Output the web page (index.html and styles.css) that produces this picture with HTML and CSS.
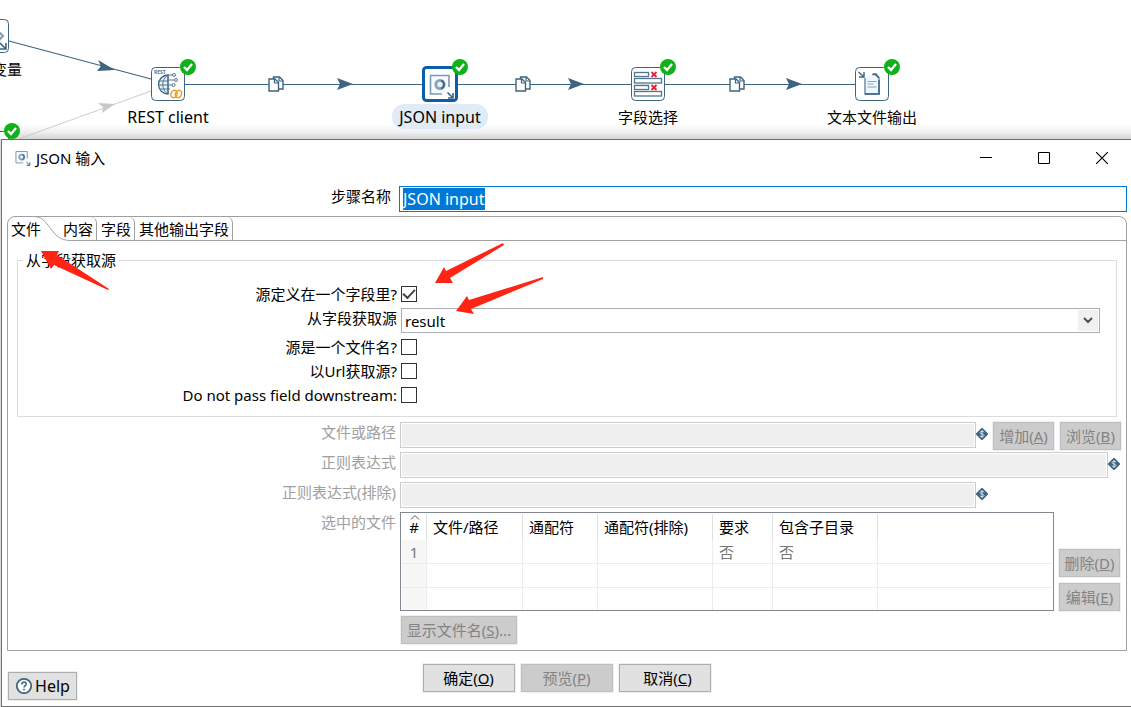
FILE: index.html
```html
<!DOCTYPE html>
<html lang="zh-CN">
<head>
<meta charset="utf-8">
<title>JSON 输入</title>
<link rel="stylesheet" href="styles.css">
</head>
<body>
<svg class="defs" aria-hidden="true">
  <defs>
    <symbol id="ok" viewBox="0 0 16 16"><circle cx="8" cy="8" r="8" fill="#0db315"/><path d="M4 8l3 3 5-6" fill="none" stroke="#fff" stroke-width="2.4"/></symbol>
    <symbol id="var" viewBox="0 0 12 12"><path d="M6 .5L11.500 6 6 11.500.5 6z" fill="#3d6480" stroke="#3d6480" stroke-width="1.400" stroke-linejoin="round"/><path d="M8.200 4.300C7.500 2.900 4 3 4 4.600S8 5.800 8 7.400 4.600 9 3.800 7.700M6 2v8" fill="none" stroke="#e4ebf0" stroke-width=".9"/></symbol>
    <symbol id="json" viewBox="0 0 26 26"><path d="M20 14V2.500H1.500V21H13" fill="#f4faff" stroke="#7f9aae" stroke-width="1.600"/><circle cx="11" cy="11.500" r="4.200" fill="#e3f3ff" stroke="#8ba3b5" stroke-width="2.800"/><path d="M12 7.500a4.200 4.200 0 0 1 0 8" fill="none" stroke="#3d6480" stroke-width="1.800"/><path d="M18.500 19.500l5 5M24 20v5h-5" fill="none" stroke="#3d6480" stroke-width="1.600"/></symbol>
    <symbol id="pages" viewBox="0 0 16 16"><path d="M5.500 3V1h6l3.500 3.500V13H6z" fill="#fff" stroke="#3d6480" stroke-width="1.400"/><path d="M11 1v4h4" fill="none" stroke="#3d6480" stroke-width="1.200"/><path d="M1 3h6l3.500 3.500V15H1z" fill="#fff" stroke="#3d6480" stroke-width="1.400"/><path d="M6.500 3v4h4" fill="none" stroke="#3d6480" stroke-width="1.200"/></symbol>
    <symbol id="head" viewBox="0 0 16 12"><path d="M0 0l16 6-16 6 3-6z" fill="#3d6480"/></symbol>
  </defs>
</svg>

<section class="canvas">
  <svg class="hops" width="1131" height="139" aria-hidden="true">
    <g fill="none" stroke="#3d6480" stroke-width="1.200">
      <path d="M9 41L151 79"/><path d="M185 84.500H422M458 84.500H631M665 84.500H855"/>
    </g>
    <path d="M20 138.500L151 91" stroke="#ccc" fill="none"/>
    <path d="M98 60l17 10-18 1 4-5z" fill="#3d6480"/>
    <path d="M98 103l17 1-13 9 1-6z" fill="#c8c8c8"/>
    <use href="#pages" x="268" y="76" width="16" height="16"/>
    <use href="#pages" x="515" y="76" width="16" height="16"/>
    <use href="#pages" x="729" y="76" width="16" height="16"/>
    <use href="#head" x="337" y="78" width="16" height="12"/>
    <use href="#head" x="568" y="78" width="16" height="12"/>
    <use href="#head" x="786" y="78" width="16" height="12"/>
  </svg>

  <div class="node node-vars">
    <svg class="icon" viewBox="0 0 34 34"><rect x=".5" y=".5" width="33" height="33" rx="4" fill="#fff" stroke="#3d6480"/><path d="M23 12l5 5-5 5" fill="none" stroke="#7f9aae" stroke-width="2"/><path d="M25 24l5 5M31 24v6h-6" fill="none" stroke="#3d6480" stroke-width="1.600"/></svg>
    <span class="caption">获取变量</span>
  </div>
  <div class="node node-below">
    <svg class="icon" viewBox="0 0 34 34"><rect x=".5" y=".5" width="33" height="33" rx="4" fill="#fff" stroke="#3d6480"/></svg>
    <svg class="badge"><use href="#ok"/></svg>
  </div>
  <div class="node node-rest">
    <svg class="icon" viewBox="0 0 34 34"><rect x=".5" y=".5" width="33" height="33" rx="4" fill="#fff" stroke="#3d6480"/>
      <text class="tiny" x="3" y="7">REST</text>
      <path d="M17 8a9.500 9.500 0 0 0 0 19z" fill="#e6f3fc" stroke="#3d6480" stroke-width="1.300"/><path d="M17 8c-7 4-7 15 0 19M17 8v19M8 14h9M7.500 18h9M9 22h8" fill="none" stroke="#53758d"/><path d="M17 8h5M17 13h6M17 18h4M17 22h2" stroke="#53758d"/><g fill="#fff" stroke="#53758d"><circle cx="23" cy="8" r="1.500"/><circle cx="25" cy="13" r="1.500"/><circle cx="22.500" cy="18" r="1.500"/></g>
      <g fill="none" stroke="#f39a1e" stroke-width="1.500"><ellipse cx="23" cy="27" rx="3" ry="3.800" transform="rotate(25 23 27)"/><ellipse cx="27.500" cy="27" rx="3" ry="3.800" transform="rotate(25 27.500 27)"/></g></svg>
    <svg class="badge"><use href="#ok"/></svg>
    <span class="caption latin">REST client</span>
  </div>
  <div class="node node-json">
    <svg class="icon" viewBox="0 0 34 34"><rect x="0.500" y="0.500" width="33" height="33" rx="3" fill="#fff" stroke="#0d5ea8" stroke-width="3"/><use href="#json" x="6" y="6" width="26" height="26"/></svg>
    <svg class="badge"><use href="#ok"/></svg>
    <span class="caption latin picked">JSON input</span>
  </div>
  <div class="node node-select">
    <svg class="icon" viewBox="0 0 34 34"><rect x=".5" y=".5" width="33" height="33" rx="4" fill="#fff" stroke="#3d6480"/><g fill="#fff" stroke="#53758d" stroke-width="1.300"><rect x="3.500" y="5.500" width="14" height="4"/><rect x="3.500" y="11.500" width="27" height="4.500"/><rect x="3.500" y="18.500" width="14" height="4"/><rect x="3.500" y="24.500" width="27" height="4.500"/></g><path d="M4 16.500h15" stroke="#8ba3b5" stroke-width="1.500"/><path d="M20.500 5l5 5m0-5l-5 5M20.500 18l5 5m0-5l-5 5" stroke="#ed1c35" stroke-width="1.800"/></svg>
    <svg class="badge"><use href="#ok"/></svg>
    <span class="caption">字段选择</span>
  </div>
  <div class="node node-text">
    <svg class="icon" viewBox="0 0 34 34"><rect x=".5" y=".5" width="33" height="33" rx="4" fill="#fff" stroke="#3d6480"/><path d="M10 11v16h14V11l-4-3.500h-3" fill="#edf7ff" stroke="#6f8da3" stroke-width="1.500"/><path d="M10 27h14V13" fill="none" stroke="#3d6480" stroke-width="1.500"/><path d="M18 7h3l3 4" fill="none" stroke="#3d6480" stroke-width="1.500"/><path d="M12.500 14.500h9M12.500 17h6M12.500 20h9" stroke="#8ba3b5"/><path d="M3.500 5l5 4.500M9 5v5H4" fill="none" stroke="#3d6480" stroke-width="1.400"/></svg>
    <svg class="badge"><use href="#ok"/></svg>
    <span class="caption">文本文件输出</span>
  </div>
</section>

<main class="dialog">
  <header class="titlebar">
    <svg width="16" height="16"><use href="#json"/></svg>
    <h1>JSON 输入</h1>
    <div class="winbtns">
      <button aria-label="最小化"><svg width="12" height="12"><path d="M0 5.500h12" stroke="#000"/></svg></button>
      <button aria-label="最大化"><svg width="12" height="12"><path d="M.5.5h11v11H.5z" fill="none" stroke="#000"/></svg></button>
      <button aria-label="关闭"><svg width="12" height="12"><path d="M0 0l12 12M12 0L0 12" stroke="#000" stroke-width="1.200"/></svg></button>
    </div>
  </header>

  <div class="namerow">
    <label for="step">步骤名称</label>
    <input id="step" class="stepname latin" value="JSON input">
  </div>

  <div class="folder">
    <div class="tabs" role="tablist">
      <button class="tab current" role="tab" aria-selected="true">文件<svg class="curve" width="62" height="25" aria-hidden="true"><path d="M0 25V8L8 1H26C42 0 42 24 62 24V25z" fill="#fff"/><path d="M7 .5H26C42 .5 42 24.500 62 24.500" fill="none" stroke="#a0a0a0"/></svg></button>
      <button class="tab" role="tab">内容</button>
      <button class="tab" role="tab">字段</button>
      <button class="tab" role="tab">其他输出字段</button>
    </div>
    <div class="panel">
      <fieldset>
        <legend>从字段获取源</legend>
        <div class="opt"><label for="c1">源定义在一个字段里?</label><input id="c1" type="checkbox" checked></div>
        <div class="opt combo"><label for="src">从字段获取源</label>
          <div class="selectbox"><select id="src"><option>result</option></select><span class="drop"><svg width="10" height="7"><path d="M1 1l4 4 4-4" fill="none" stroke="#505050" stroke-width="2"/></svg></span></div></div>
        <div class="opt"><label for="c2">源是一个文件名?</label><input id="c2" type="checkbox"></div>
        <div class="opt"><label for="c3">以Url获取源?</label><input id="c3" type="checkbox"></div>
        <div class="opt"><label for="c4">Do not pass field downstream:</label><input id="c4" type="checkbox"></div>
      </fieldset>

      <div class="row"><label for="path">文件或路径</label><input id="path" disabled><svg class="var"><use href="#var"/></svg>
        <div class="side"><button class="btn" disabled>增加(<u>A</u>)</button><button class="btn" disabled>浏览(<u>B</u>)</button></div></div>
      <div class="row wide"><label for="re">正则表达式</label><input id="re" disabled><svg class="var"><use href="#var"/></svg></div>
      <div class="row"><label for="rex">正则表达式(排除)</label><input id="rex" disabled><svg class="var"><use href="#var"/></svg><div class="side"></div></div>

      <div class="files">
        <span class="fileslabel" id="fl">选中的文件</span>
        <div class="tablebox">
          <table aria-labelledby="fl">
            <colgroup><col class="w26"><col class="w96"><col class="w75"><col class="w115"><col class="w60"><col class="w105"><col></colgroup>
            <thead><tr><th class="num"><svg class="sort" width="10" height="5"><path d="M1 4.500l4-4 4 4" fill="none" stroke="#555"/></svg>#</th><th>文件/路径</th><th>通配符</th><th>通配符(排除)</th><th>要求</th><th>包含子目录</th><th></th></tr></thead>
            <tbody>
              <tr><td>1</td><td></td><td></td><td></td><td>否</td><td>否</td><td></td></tr>
              <tr><td></td><td></td><td></td><td></td><td></td><td></td><td></td></tr>
              <tr><td></td><td></td><td></td><td></td><td></td><td></td><td></td></tr>
            </tbody>
          </table>
        </div>
        <div class="stack"><button class="btn" disabled>删除(<u>D</u>)</button><button class="btn" disabled>编辑(<u>E</u>)</button></div>
      </div>
      <div class="showrow"><button class="btn" disabled>显示文件名(<u>S</u>)...</button></div>
    </div>
  </div>

  <footer>
    <button class="btn latin help"><svg width="18" height="18"><circle cx="9" cy="9" r="7.200" fill="#fff" stroke="#3d6480" stroke-width="1.800"/><path d="M6.800 7.500C6.800 4 11.500 4.500 11.200 7.200 11 8.600 9 8.600 9 10.500M9 11.800v1.700" fill="none" stroke="#3d6480" stroke-width="1.600"/></svg>Help</button>
    <div class="actions"><button class="btn">确定(<u>O</u>)</button><button class="btn" disabled>预览(<u>P</u>)</button><button class="btn cancel">取消(<u>C</u>)</button></div>
  </footer>
</main>

<svg class="marks" width="560" height="320" aria-hidden="true">
  <g fill="#ff2414">
    <path d="M41 251L59 251 57 255 109 289 108 290 54 265 51 269z"/>
    <path d="M435 283L444 267 446 271 503 243 504 245 450 278 453 283z"/>
    <path d="M456 311L467 296 469 300 543 277 543 279 471 309 474 314z"/>
  </g>
</svg>
<script src="app.js"></script>
</body>
</html>
```
FILE: styles.css
```css
* { box-sizing: border-box; }
body, button, input, select { font: 15px/20px "Noto Sans", "Noto Sans CJK SC", sans-serif; color: #000; }
body { margin: 0; position: relative; background: #dcdcdc; overflow: hidden; }
button, input, select { margin: 0; padding: 0; border-radius: 0; }
.latin { font-size: 16px; }
.defs { position: absolute; width: 0; height: 0; }

.canvas { position: relative; height: 139px; overflow: hidden; background: linear-gradient(#fff 124px, #f0f0f0 132px, #d4d4d4 139px); }
.hops { position: absolute; left: 0; top: 0; }
.node { position: absolute; width: 34px; display: flex; flex-direction: column; align-items: center; gap: 3px; }
.icon { width: 34px; height: 34px; overflow: visible; flex: none; }
.badge { position: absolute; left: 29px; top: -8px; width: 16px; height: 16px; }
.caption { white-space: nowrap; line-height: 26px; height: 25px; padding: 0 7px; border-radius: 12px; }
.picked { background: #e1ebf5; }
.tiny { font: bold 5px "Open Sans", sans-serif; fill: #53758d; }
.node-vars { left: -25px; top: 19px; }
.node-below { left: -25px; top: 131px; }
.node-rest { left: 151px; top: 67px; }
.node-json { left: 423px; top: 67px; }
.node-select { left: 631px; top: 67px; }
.node-text { left: 855px; top: 67px; }

.dialog { margin-left: 1px; border: 1px solid #707070; border-right: 0; background: #fff; padding: 0 4px 6px 5px; }
.titlebar { display: flex; align-items: center; height: 36px; padding-left: 8px; gap: 5px; }
h1 { margin: 0; flex: 1; font-size: 15px; font-weight: 400; }
.winbtns { display: flex; margin-right: -4px; }
.winbtns button { width: 58px; height: 36px; border: 0; background: none; display: flex; align-items: center; justify-content: center; }

.namerow { display: flex; align-items: flex-start; gap: 8px; margin-top: 10px; }
.namerow label { width: 384px; text-align: right; }
.stepname { flex: 1; height: 26px; border: 1px solid #0078d7; padding: 0 3px; outline: 0; }
.stepname::selection { background: #0078d7; color: #fff; }

.folder { margin-top: 4px; border: 1px solid #a0a0a0; border-radius: 8px 8px 0 0; }
.tabs { display: flex; height: 24px; border-bottom: 1px solid #a0a0a0; }
.tab { border: 0; border-right: 1px solid #a0a0a0; border-top-right-radius: 6px; background: none; height: 23px; padding: 0 3px 0 4px; line-height: 20px; }
.tab.current { position: relative; border: 0; width: 51px; text-align: left; padding-left: 3px; isolation: isolate; }
.curve { position: absolute; left: 0; top: -1px; z-index: -1; }
.panel { padding: 9px 5px 6px 9px; }

fieldset { margin: 0 4px 5px 0; min-width: 0; border: 1px solid #dcdcdc; padding: 12px 16px 9px 0; }
legend { margin-left: 5px; padding: 0 3px; line-height: 20px; }
.opt { display: flex; align-items: center; gap: 4px; height: 24px; }
.opt label { width: 379px; text-align: right; white-space: nowrap; }
.opt input { appearance: none; width: 16px; height: 16px; border: 1px solid #333; background: #fff; display: grid; place-items: center; }
.opt input:checked::after { content: ""; width: 10px; height: 5px; border: solid #444; border-width: 0 0 2px 2px; transform: rotate(-47deg); margin-bottom: 3px; }
.combo { height: 29px; align-items: flex-start; }
.combo label { line-height: 24px; }
.selectbox { flex: 1; position: relative; display: flex; margin-top: 2px; }
select { appearance: none; flex: 1; height: 25px; border: 1px solid #abadb3; background: #fff; padding: 0 3px; }
.drop { position: absolute; right: 2px; top: 2px; width: 20px; height: 21px; background: #f0f0f0; display: grid; place-items: center; pointer-events: none; }

.row { display: flex; align-items: flex-start; height: 30px; }
.row label, .fileslabel { width: 379px; margin-right: 4px; text-align: right; color: #a0a0a0; flex: none; }
.row input { flex: 1; min-width: 0; height: 26px; border: 1px solid #ccc; background: #f0f0f0; box-shadow: inset 0 0 0 1px #fff; }
.var { width: 12px; height: 12px; margin-top: 6px; flex: none; overflow: visible; }
.side { width: 133px; display: flex; justify-content: flex-end; gap: 6px; }
.wide { margin-right: 1px; }
.btn { height: 28px; border: 1px solid #adadad; background: #e1e1e1; box-shadow: 0 0 0 1px #f0f0f0; padding: 0 4px; white-space: nowrap; }
.btn:disabled { background: #ccc; border-color: #bfbfbf; color: #838383; }
.side .btn, .stack .btn { width: 61px; }

.files { display: flex; }
.tablebox { flex: 1; height: 99px; border: 1px solid #828790; padding: 1px; overflow: hidden; }
table { width: 100%; table-layout: fixed; border-collapse: separate; border-spacing: 0; }
th, td { border-right: 1px solid #ececec; padding: 0 0 0 6px; text-align: left; font-weight: 400; white-space: nowrap; height: 24px; line-height: 20px; }
th { height: 26px; border-color: #e0e0e0; }
td { border-bottom: 1px solid #ececec; color: #777; }
th:last-child, td:last-child { border-right: 0; }
.num, td:first-child { text-align: center; padding-left: 0; }
td:first-child { background: #f7f7f7; }
.num { position: relative; }
.sort { position: absolute; left: 8px; top: 1px; }
.w26 { width: 25px; } .w96 { width: 96px; } .w75 { width: 75px; } .w115 { width: 115px; } .w60 { width: 60px; } .w105 { width: 105px; }
.stack { width: 67px; padding-right: 1px; display: flex; flex-direction: column; justify-content: flex-end; align-items: flex-end; gap: 6px; }
.showrow { margin: 5px 0 0 384px; display: flex; }
.showrow .btn { width: 116px; }

footer { display: grid; grid-template-columns: 1fr auto 1fr; margin-top: 13px; padding: 0 2px 0 1px; }
.help { width: 69px; margin-top: 8px; display: flex; align-items: center; justify-content: center; gap: 2px; }
.actions { display: flex; gap: 6px; }
.actions .btn { width: 92px; }
.actions .cancel { padding-left: 10px; }
.marks { position: absolute; left: 0; top: 0; pointer-events: none; }
```
FILE: app.js
```js
const step = document.getElementById("step");
step.focus();
step.select();
```
